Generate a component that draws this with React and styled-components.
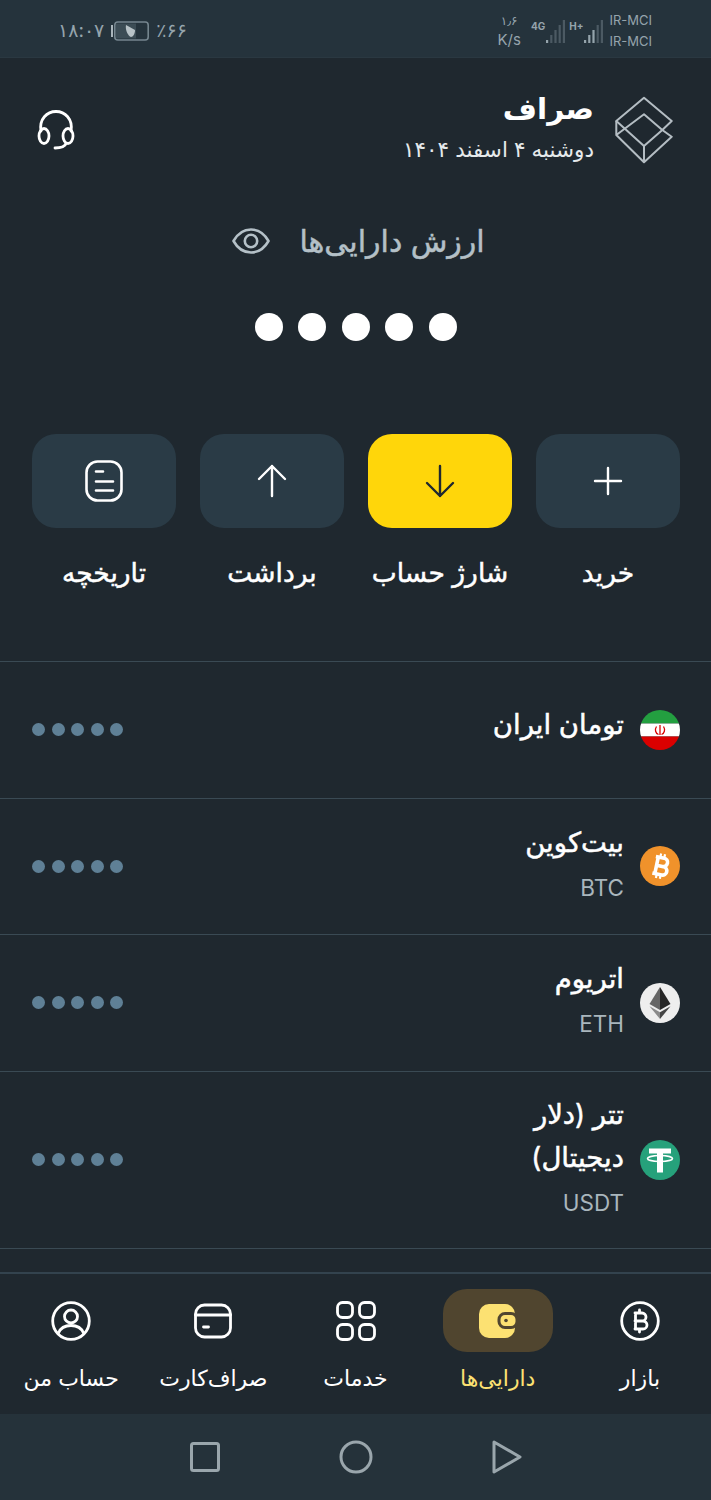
import React from "react";
import styled, { createGlobalStyle } from "styled-components";

const GlobalStyle = createGlobalStyle`
  html, body {
    margin: 0;
    padding: 0;
    background: #1f282f;
  }
  body {
    font-family: "Inter", "DejaVu Sans", sans-serif;
  }
`;

const Page = styled.div`
  width: 711px;
  height: 1500px;
  display: flex;
  flex-direction: column;
  overflow: hidden;
  background: #1f282f;
  color: #fff;
  direction: rtl;
`;

/* status bar */
const StatusBar = styled.div`
  height: 58px;
  flex: none;
  box-sizing: border-box;
  display: flex;
  justify-content: space-between;
  align-items: center;
  padding: 4px 59px 0 58px;
  background: #25333c;
  color: #95a4ac;
  direction: ltr;
  border-bottom: 1px solid #2a3841;
`;

const StatusGroup = styled.div`
  display: flex;
  align-items: center;
  gap: ${(p) => p.$gap || 7}px;
`;

const StatusText = styled.span`
  font-size: 19px;
  line-height: 1;
`;

const SpeedText = styled.div`
  display: flex;
  flex-direction: column;
  align-items: center;
  gap: 1px;
  font-size: 12px;
  line-height: 18px;
  margin-right: 7px;
  span + span {
    font-size: 15px;
  }
`;

const CarrierText = styled.div`
  display: flex;
  flex-direction: column;
  gap: 5px;
  font-size: 13px;
  line-height: 16px;
  margin-left: 2px;
`;

const SimCell = styled.div`
  display: flex;
  align-items: flex-start;
  gap: 1px;
`;

const SimLabel = styled.span`
  font-size: 10px;
  font-weight: 700;
  line-height: 12px;
  margin-top: 2px;
`;

/* header */
const Header = styled.header`
  display: flex;
  align-items: center;
  justify-content: space-between;
  padding: 38px 38px 0 36px;
`;

const Brand = styled.div`
  display: flex;
  align-items: center;
  gap: 21px;
`;

const BrandText = styled.div`
  display: flex;
  flex-direction: column;
`;

const BrandName = styled.div`
  font-size: 29.5px;
  font-weight: 700;
  line-height: 24px;
  margin-bottom: 14px;
`;

const BrandDate = styled.div`
  font-size: 21.5px;
  line-height: 30px;
  color: #e6eaec;
`;

/* balance */
const Balance = styled.section`
  margin-top: 59px;
  display: flex;
  flex-direction: column;
  align-items: center;
`;

const BalanceLabel = styled.div`
  display: flex;
  align-items: center;
  gap: 29px;
  font-size: 30px;
  line-height: 36px;
  color: #b4c0c7;
  -webkit-text-stroke: 0.5px #b4c0c7;
  transform: translateX(3px);
`;

const MaskedRow = styled.div`
  display: flex;
  gap: ${(p) => p.$gap}px;
`;

const MaskDot = styled.span`
  width: ${(p) => p.$size}px;
  height: ${(p) => p.$size}px;
  border-radius: 50%;
  background: ${(p) => p.$color};
`;

const BalanceDots = styled.div`
  margin-top: 54px;
`;

/* actions */
const Actions = styled.div`
  margin-top: 93px;
  padding: 0 31px 0 32px;
  display: grid;
  grid-template-columns: repeat(4, 144px);
  justify-content: space-between;
`;

const Action = styled.div`
  display: flex;
  flex-direction: column;
  align-items: center;
`;

const ActionTile = styled.div`
  width: 144px;
  height: 94px;
  border-radius: 24px;
  display: flex;
  align-items: center;
  justify-content: center;
  color: ${(p) => (p.$primary ? "#1f282f" : "#fff")};
  background: ${(p) => (p.$primary ? "#ffd60a" : "#2a3b46")};
`;

const ActionLabel = styled.div`
  margin-top: 26px;
  font-size: 26.5px;
  line-height: 36px;
  white-space: nowrap;
  -webkit-text-stroke: 0.5px #fff;
`;

/* asset list */
const AssetList = styled.main`
  margin-top: 71px;
  flex: 1;
  min-height: 0;
  border-top: 1px solid #3a4a54;
`;

const AssetRow = styled.div`
  min-height: 136.6px;
  box-sizing: border-box;
  padding: 21px 31px 21px 32px;
  display: flex;
  align-items: center;
  gap: 16px;
  border-bottom: 1px solid #3a4a54;
`;

const CoinBadge = styled.svg`
  width: 40px;
  height: 40px;
  flex: none;
  display: block;
`;

const AssetName = styled.div`
  flex: 1;
  min-width: 0;
`;

const AssetTitle = styled.div`
  font-size: 27.5px;
  line-height: 43px;
  max-width: 130px;
  -webkit-text-stroke: 0.5px #fff;
  &:last-child {
    margin-bottom: 10px;
    max-width: none;
  }
`;

const AssetSymbol = styled.div`
  font-size: 22.5px;
  line-height: 48px;
  color: #a9b6bd;
`;

/* bottom navigation */
const BottomNav = styled.nav`
  height: 142px;
  flex: none;
  box-sizing: border-box;
  display: grid;
  grid-template-columns: repeat(5, 1fr);
  border-top: 2px solid #33434e;
`;

const NavItem = styled.div`
  display: flex;
  flex-direction: column;
  align-items: center;
  padding-top: 15px;
  color: ${(p) => (p.$active ? "#fce172" : "#fff")};
`;

const NavIcon = styled.div`
  width: 110px;
  height: 63px;
  border-radius: 24px;
  display: flex;
  align-items: center;
  justify-content: center;
  background: ${(p) => (p.$active ? "#50452f" : "transparent")};
`;

const NavLabel = styled.div`
  margin-top: 11px;
  font-size: 22px;
  line-height: 30px;
  white-space: nowrap;
`;

const SystemBar = styled.div`
  height: 86px;
  flex: none;
  display: grid;
  grid-template-columns: repeat(3, 151px);
  justify-content: center;
  align-items: center;
  justify-items: center;
  direction: ltr;
  background: #25323a;
  color: #9aa6ac;
`;

const Svg = ({ w = 40, h = 40, weight = 2.8, children }) => (
  <svg
    width={w}
    height={h}
    viewBox={`0 0 ${w} ${h}`}
    fill="none"
    stroke="currentColor"
    strokeWidth={weight}
    strokeLinecap="round"
    strokeLinejoin="round"
  >
    {children}
  </svg>
);

const LogoIcon = () => (
  <svg width="58" height="68" viewBox="16 11 58 68" fill="none" stroke="#b4bdc3" strokeWidth="2" strokeLinejoin="round">
    <path d="M45 12.7L72.7 36 63.3 45 45 61 17.3 36z" />
    <path d="M17.3 36V50L45 77.3 72.7 51.7 63.3 45 45 29.3 17.3 50" />
    <path d="M45 61V77.3" />
  </svg>
);

const HeadsetIcon = () => (
  <Svg w={40} h={42}>
    <path d="M5 22C3 10 11 2.5 20 2.5S37 10 35 22" />
    <ellipse cx="8" cy="27" rx="5" ry="7.5" />
    <ellipse cx="32" cy="27" rx="5" ry="7.5" />
    <path d="M30 34.5c-1 3-5 4.5-11 4.5" />
  </Svg>
);

const EyeIcon = () => (
  <svg width="38" height="26" viewBox="0 0 38 26" fill="none" stroke="currentColor" strokeWidth="2.6">
    <path d="M1.5 13C6 5 12 1.5 19 1.5S32 5 36.5 13C32 21 26 24.5 19 24.5S6 21 1.5 13z" strokeLinejoin="round" />
    <circle cx="19" cy="13" r="6.2" />
  </svg>
);

const PlusIcon = () => (
  <Svg w={32} h={32} weight={2.4}>
    <path d="M16 3V29M3 16H29" />
  </Svg>
);

const ArrowDownIcon = () => (
  <Svg w={32} h={36} weight={2.4}>
    <path d="M16 3V33M3 20L16 33 29 20" />
  </Svg>
);

const ArrowUpIcon = () => (
  <Svg w={32} h={36} weight={2.4}>
    <path d="M16 33V3M3 16L16 3 29 16" />
  </Svg>
);

const HistoryIcon = () => (
  <Svg w={38} h={42} weight={2.6}>
    <rect x="1.5" y="1.5" width="35" height="39" rx="11" />
    <path d="M11 11.5H18M11 21.5H28M11 30.5H28" />
  </Svg>
);

const IranFlag = () => (
  <CoinBadge viewBox="0 0 40 40">
    <defs>
      <clipPath id="flag-clip">
        <circle cx="20" cy="20" r="20" />
      </clipPath>
    </defs>
    <g clipPath="url(#flag-clip)">
      <rect width="40" height="13.5" fill="#239f40" />
      <rect y="13.5" width="40" height="13" fill="#fff" />
      <rect y="26.5" width="40" height="13.5" fill="#da0000" />
      <path d="M20 15v10M16.5 16.5c-2 3-1 7 2 8M23.5 16.5c2 3 1 7-2 8" stroke="#da0000" strokeWidth="1.3" fill="none" />
    </g>
  </CoinBadge>
);

const BitcoinBadge = () => (
  <CoinBadge viewBox="0 0 40 40">
    <circle cx="20" cy="20" r="20" fill="#f0922b" />
    <g transform="rotate(12 20 20)" fill="none" stroke="#fff" strokeWidth="3.6">
      <path d="M14 11.5H22.5a4 4 0 0 1 0 8.5H15M15 20H23.5a4.2 4.2 0 0 1 0 8.5H14M16.5 11V29" />
      <path d="M18.5 7.5V11.5M22.5 7.5V11.5M18.5 28.5V32.5M22.5 28.5V32.5" strokeWidth="2.2" />
    </g>
  </CoinBadge>
);

const EthereumBadge = () => (
  <CoinBadge viewBox="0 0 40 40">
    <circle cx="20" cy="20" r="20" fill="#eeeeee" />
    <path d="M20 4L9.5 21 20 27z" fill="#666" />
    <path d="M20 4L30.5 21 20 27z" fill="#262626" />
    <path d="M9.5 23.2L20 36V29.3z" fill="#8a8a8a" />
    <path d="M30.5 23.2L20 36V29.3z" fill="#444" />
  </CoinBadge>
);

const TetherBadge = () => (
  <CoinBadge viewBox="0 0 40 40">
    <circle cx="20" cy="20" r="20" fill="#26a17b" />
    <path d="M9 8.5H31V13.5H23V32.5H17V13.5H9z" fill="#fff" />
    <ellipse cx="20" cy="18.5" rx="12.5" ry="3" fill="none" stroke="#fff" strokeWidth="1.6" />
  </CoinBadge>
);

const CoinNavIcon = () => (
  <Svg>
    <circle cx="20" cy="20" r="18.3" />
    <path d="M15 12H22a3.8 3.8 0 0 1 0 8H15M15 20H23a4 4 0 0 1 0 8H15M15.5 12V28M19.5 9V12M19.5 28V31" />
  </Svg>
);

const WalletIcon = () => (
  <svg width="40" height="36" viewBox="0 0 40 36">
    <rect x="1" y="1" width="36" height="34" rx="10" fill="#fce172" />
    <rect x="21" y="10.5" width="18" height="14" rx="6" fill="#fce172" stroke="#50452f" strokeWidth="3" />
    <circle cx="28" cy="17.5" r="1.8" fill="#50452f" />
  </svg>
);

const GridIcon = () => (
  <Svg>
    <rect x="1.5" y="1.5" width="15" height="15" rx="5" />
    <rect x="23.5" y="1.5" width="15" height="15" rx="5" />
    <rect x="1.5" y="23.5" width="15" height="15" rx="5" />
    <rect x="23.5" y="23.5" width="15" height="15" rx="5" />
  </Svg>
);

const CardIcon = () => (
  <Svg>
    <rect x="2.5" y="4" width="35" height="32" rx="9" />
    <path d="M2.5 14H37.5M10.5 26H15.5" />
  </Svg>
);

const UserIcon = () => (
  <Svg>
    <circle cx="20" cy="20" r="18.3" />
    <circle cx="20" cy="15.5" r="6.5" />
    <path d="M7.5 32c2-5 7-7.5 12.5-7.5S30.5 27 32.5 32" />
  </Svg>
);

const SignalBars = ({ filled }) => (
  <svg width="20" height="26" viewBox="0 0 20 26" fill="currentColor">
    {[0, 1, 2, 3, 4].map((i) => (
      <rect
        key={i}
        x={i * 4.2}
        y={22 - i * 5}
        width="2.2"
        height={3 + i * 5}
        opacity={i < filled ? 1 : 0.35}
      />
    ))}
  </svg>
);

const BatteryIcon = () => (
  <svg width="38" height="20" viewBox="0 0 38 20" fill="none">
    <rect x="0" y="4" width="2" height="12" fill="#aab5bb" />
    <rect x="3.8" y="1" width="33.4" height="18" rx="3" stroke="#75858e" strokeWidth="1.6" />
    <rect x="5" y="2.5" width="20" height="15" fill="#3c4c55" />
    <path d="M15 4l9 5c0 4-2 7-4 7-3-1-6-7-5-12z" fill="#b8c2c7" />
  </svg>
);

const actions = [
  { id: 1, label: "خرید", icon: <PlusIcon /> },
  { id: 2, label: "شارژ حساب", icon: <ArrowDownIcon />, primary: true },
  { id: 3, label: "برداشت", icon: <ArrowUpIcon /> },
  { id: 4, label: "تاریخچه", icon: <HistoryIcon /> },
];

const assets = [
  { id: 1, title: "تومان ایران", badge: <IranFlag /> },
  { id: 2, title: "بیت‌کوین", symbol: "BTC", badge: <BitcoinBadge /> },
  { id: 3, title: "اتریوم", symbol: "ETH", badge: <EthereumBadge /> },
  { id: 4, title: "تتر (دلار دیجیتال)", symbol: "USDT", badge: <TetherBadge /> },
];

const navItems = [
  { id: 1, label: "بازار", icon: <CoinNavIcon /> },
  { id: 2, label: "دارایی‌ها", icon: <WalletIcon />, active: true },
  { id: 3, label: "خدمات", icon: <GridIcon /> },
  { id: 4, label: "صراف‌کارت", icon: <CardIcon /> },
  { id: 5, label: "حساب من", icon: <UserIcon /> },
];

const Masked = ({ size, gap, color }) => (
  <MaskedRow $gap={gap}>
    {[0, 1, 2, 3, 4].map((i) => (
      <MaskDot key={i} $size={size} $color={color} />
    ))}
  </MaskedRow>
);

export default function App() {
  return (
    <Page>
      <GlobalStyle />
      <StatusBar>
        <StatusGroup>
          <StatusText>۱۸:۰۷</StatusText>
          <BatteryIcon />
          <StatusText>٪۶۶</StatusText>
        </StatusGroup>
        <StatusGroup $gap={3}>
          <SpeedText>
            <span>۱٫۶</span>
            <span>K/s</span>
          </SpeedText>
          <SimCell>
            <SimLabel>4G</SimLabel>
            <SignalBars filled={1} />
          </SimCell>
          <SimCell>
            <SimLabel>H+</SimLabel>
            <SignalBars filled={3} />
          </SimCell>
          <CarrierText>
            <span>IR-MCI</span>
            <span>IR-MCI</span>
          </CarrierText>
        </StatusGroup>
      </StatusBar>

      <Header>
        <Brand>
          <LogoIcon />
          <BrandText>
            <BrandName>صراف</BrandName>
            <BrandDate>دوشنبه ۴ اسفند ۱۴۰۴</BrandDate>
          </BrandText>
        </Brand>
        <HeadsetIcon />
      </Header>

      <Balance>
        <BalanceLabel>
          <span>ارزش دارایی‌ها</span>
          <EyeIcon />
        </BalanceLabel>
        <BalanceDots>
          <Masked size={28} gap={15.5} color="#fff" />
        </BalanceDots>
      </Balance>

      <Actions>
        {actions.map((item) => (
          <Action key={item.id}>
            <ActionTile $primary={item.primary}>{item.icon}</ActionTile>
            <ActionLabel>{item.label}</ActionLabel>
          </Action>
        ))}
      </Actions>

      <AssetList>
        {assets.map((asset) => (
          <AssetRow key={asset.id}>
            {asset.badge}
            <AssetName>
              <AssetTitle>{asset.title}</AssetTitle>
              {asset.symbol && <AssetSymbol>{asset.symbol}</AssetSymbol>}
            </AssetName>
            <Masked size={13} gap={6.5} color="#5f8096" />
          </AssetRow>
        ))}
      </AssetList>

      <BottomNav>
        {navItems.map((item) => (
          <NavItem key={item.id} $active={item.active}>
            <NavIcon $active={item.active}>{item.icon}</NavIcon>
            <NavLabel>{item.label}</NavLabel>
          </NavItem>
        ))}
      </BottomNav>

      <SystemBar>
        <svg width="32" height="32" viewBox="0 0 32 32" fill="none" stroke="currentColor" strokeWidth="3">
          <rect x="2.5" y="2.5" width="27" height="27" rx="2" />
        </svg>
        <svg width="34" height="34" viewBox="0 0 34 34" fill="none" stroke="currentColor" strokeWidth="3">
          <circle cx="17" cy="17" r="15" />
        </svg>
        <svg width="32" height="36" viewBox="0 0 32 36" fill="none" stroke="currentColor" strokeWidth="3" strokeLinejoin="round">
          <path d="M3 3L29 18 3 33z" />
        </svg>
      </SystemBar>
    </Page>
  );
}
